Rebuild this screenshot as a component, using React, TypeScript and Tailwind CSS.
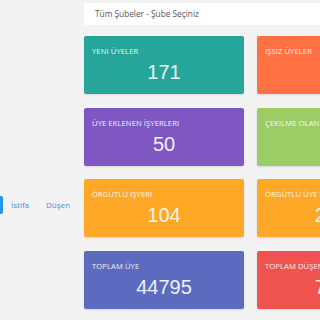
const cards = [
    { title: 'Yeni Üyeler', value: '171', color: 'bg-[#26a69a]' },
    { title: 'İşsiz Üyeler', value: '3', color: 'bg-[#ff7043]' },
    { title: 'Üye Eklenen İşyerleri', value: '50', color: 'bg-[#7e57c2]' },
    { title: 'Çekilme Olan İşyerleri', value: '12', color: 'bg-[#9ccc65]' },
    { title: 'Örgütlü İşyeri', value: '104', color: 'bg-[#ffa726]' },
    { title: 'Örgütlü Üye Sayısı', value: '2356', color: 'bg-[#ffa726]' },
    { title: 'Toplam Üye', value: '44795', color: 'bg-[#5c6bc0]' },
    { title: 'Toplam Düşen Üye', value: '7012', color: 'bg-[#ef5350]' },
]

export default function App() {
    return (
        <div className="flex h-[320px] w-[460px] overflow-hidden bg-[#f3f3f3] font-['Open_Sans',sans-serif]">
            {/* sol sekmeler */}
            <div className="w-[84px] shrink-0 pt-[196px]">
                <div className="flex items-center text-[8px] text-[#4a90d9]">
                    <span className="h-[18px] w-[3px] rounded-r-[2px] bg-[#2196f3]" />
                    <span className="ml-[8px]">İstifa</span>
                    <span className="ml-[17px]">Düşen</span>
                </div>
            </div>

            <div className="flex-1 pt-[3px]">
                <div className="flex h-[22px] w-[360px] items-center bg-white px-[11px] text-[8.3px] text-[#555]">
                    Tüm Şubeler - Şube Seçiniz
                </div>

                <div className="mt-[11px] grid grid-cols-[160px_160px] gap-x-[13px] gap-y-[13.5px]">
                    {cards.map((c) => (
                        <div key={c.title} className={`h-[58px] rounded-[2px] px-[8px] pt-[11px] shadow-[0_1px_2px_rgba(0,0,0,0.12)] ${c.color}`}>
                            <div className="whitespace-nowrap text-[7.6px] leading-[8px] uppercase tracking-[0.1px] text-white/90">
                                {c.title}
                            </div>
                            <div className="mt-[5px] text-center font-['Liberation_Sans',sans-serif] text-[20px] leading-[24px] text-white/90">
                                {c.value}
                            </div>
                        </div>
                    ))}
                </div>
            </div>
        </div>
    )
}
